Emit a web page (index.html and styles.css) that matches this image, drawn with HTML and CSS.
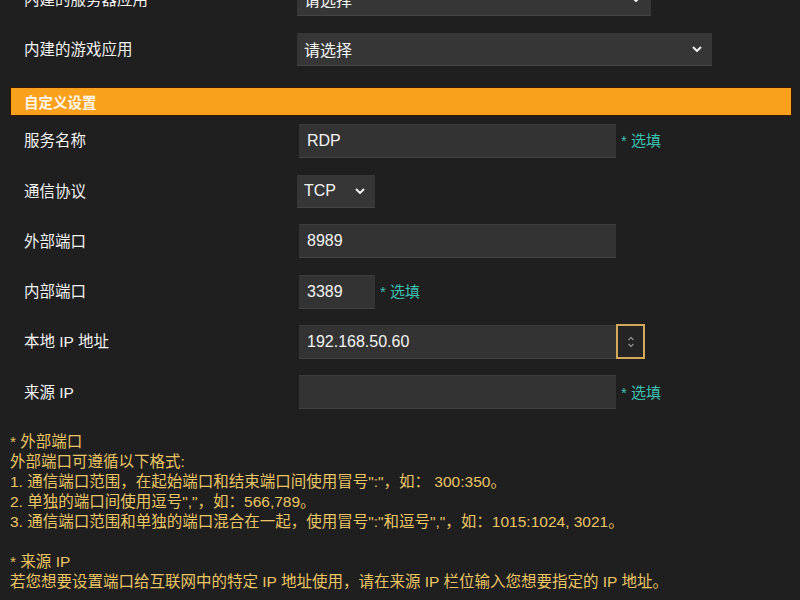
FILE: index.html
```html
<!DOCTYPE html>
<html lang="zh-CN">
<head>
<meta charset="utf-8">
<link rel="stylesheet" href="styles.css">
</head>
<body>
<div class="page">
  <div class="row first">
    <div class="label">内建的服务器应用</div>
    <div class="select w354"><span>请选择</span><svg class="chev" viewBox="0 0 10 6"><path d="M1 1l4 4 4-4"/></svg></div>
  </div>
  <div class="row">
    <div class="label">内建的游戏应用</div>
    <div class="select w415"><span>请选择</span><svg class="chev" viewBox="0 0 10 6"><path d="M1 1l4 4 4-4"/></svg></div>
  </div>

  <div class="bar">自定义设置</div>

  <div class="row">
    <div class="label">服务名称</div>
    <div class="input wide">RDP</div>
    <span class="opt">* 选填</span>
  </div>
  <div class="row">
    <div class="label">通信协议</div>
    <div class="select w78"><span>TCP</span><svg class="chev" viewBox="0 0 10 6"><path d="M1 1l4 4 4-4"/></svg></div>
  </div>
  <div class="row">
    <div class="label">外部端口</div>
    <div class="input wide">8989</div>
  </div>
  <div class="row">
    <div class="label">内部端口</div>
    <div class="input narrow">3389</div>
    <span class="opt">* 选填</span>
  </div>
  <div class="row">
    <div class="label">本地 IP 地址</div>
    <div class="input wide">192.168.50.60</div>
    <div class="spin"><svg viewBox="0 0 8 14"><path d="M1.5 5l2.5-2.5 2.5 2.5M1.5 9l2.5 2.5 2.5-2.5"/></svg></div>
  </div>
  <div class="row">
    <div class="label">来源 IP</div>
    <div class="input wide"></div>
    <span class="opt">* 选填</span>
  </div>

  <div class="notes">
    <p>* 外部端口<br>外部端口可遵循以下格式:<br>1. 通信端口范围，在起始端口和结束端口间使用冒号":"，如： 300:350。<br>2. 单独的端口间使用逗号","，如：566,789。<br>3. 通信端口范围和单独的端口混合在一起，使用冒号":"和逗号","，如：1015:1024, 3021。</p>
    <p>* 来源 IP<br>若您想要设置端口给互联网中的特定 IP 地址使用，请在来源 IP 栏位输入您想要指定的 IP 地址。</p>
  </div>
</div>
</body>
</html>
```

FILE: styles.css
```css
html, body {
  margin: 0;
  padding: 0;
  background: #1f1f1f;
  height: 100%;
  overflow: hidden;
}
.page {
  font-family: "Liberation Sans", "Noto Sans CJK SC", sans-serif;
  color: #f2f2f2;
}
.row {
  display: flex;
  align-items: center;
  height: 50.3px;
}
.row.first {
  margin-top: -26px;
}
.label {
  width: 273px;
  padding-left: 24px;
  padding-bottom: 3px;
  font-size: 15.5px;
  flex: none;
}
.select {
  height: 33px;
  box-sizing: border-box;
  background: #363636;
  border-bottom: 1px solid #444;
  display: flex;
  align-items: center;
  justify-content: space-between;
  padding: 0 10px 0 7px;
  font-size: 16px;
  color: #f4f4f4;
}
.w354 { width: 354px; }
.w415 { width: 415px; }
.w78 { width: 78px; }
.chev {
  width: 10px;
  height: 6px;
  fill: none;
  stroke: #f0f0f0;
  stroke-width: 2;
}
.bar {
  margin: 12px 8px 0 10px;
  height: 29px;
  box-sizing: border-box;
  border: 1px solid #3a1800;
  background: #f9a11c;
  color: #fff6e8;
  font-weight: bold;
  font-size: 14.5px;
  padding-left: 13px;
  display: flex;
  align-items: center;
}
.input {
  margin-left: 2px;
  height: 34px;
  box-sizing: border-box;
  background: #333;
  border-top: 1px solid #3b3b3b;
  border-bottom: 1px solid #424242;
  padding: 0 8px;
  display: flex;
  align-items: center;
  font-size: 16px;
  color: #f4f4f4;
}
.input.wide { width: 317px; }
.input.narrow { width: 76px; }
.opt {
  margin-left: 5px;
  padding-bottom: 2px;
  color: #3cc0b2;
  font-size: 15px;
}
.spin {
  width: 29px;
  height: 35px;
  box-sizing: border-box;
  border: 2px solid #d2a85a;
  background: #242424;
  display: flex;
  align-items: center;
  justify-content: center;
}
.spin svg {
  width: 8px;
  height: 14px;
  fill: none;
  stroke: #8a8a8a;
  stroke-width: 1.3;
}
.notes {
  margin: 15px 0 0 10px;
  color: #eac565;
  font-size: 15.5px;
  line-height: 20px;
}
.notes p {
  margin: 0 0 20px;
}
```
